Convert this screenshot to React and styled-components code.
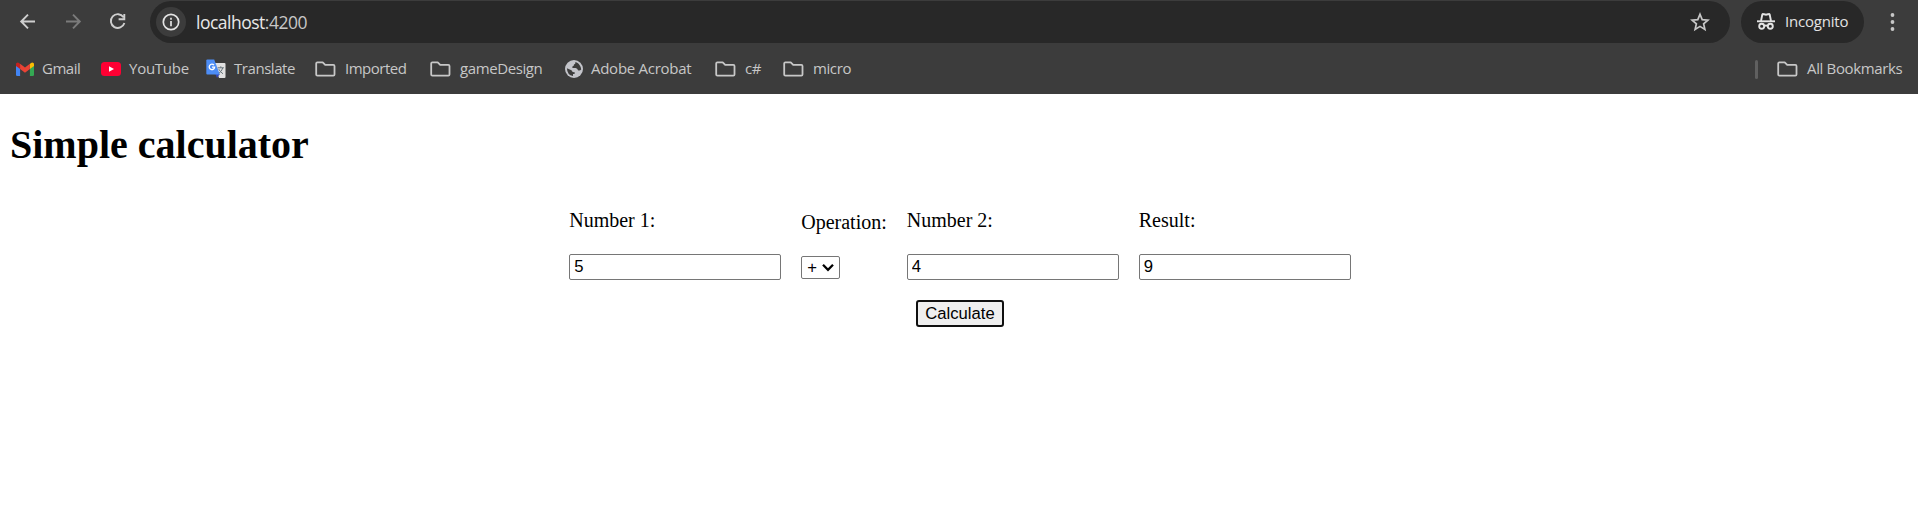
import React, { useState } from "react";
import styled, { createGlobalStyle } from "styled-components";

const GlobalStyle = createGlobalStyle`
  body { margin: 0; background: #fff; color: #000; font-family: "Liberation Serif", serif; }
  *, *::before, *::after { box-sizing: border-box; }
  svg { display: block; flex: none; }
`;

const Chrome = styled.header`
  height: 94px;
  background: #3c3c3c;
  font-family: "Open Sans", "Noto Sans", sans-serif;
  color: #c7c7c7;
`;
const Toolbar = styled.div`
  display: flex;
  align-items: center;
  height: 44px;
  padding: 1px 14px 1px 16px;
`;
const NavButtons = styled.div`
  display: flex;
  gap: 21px;
  width: 134px;
`;
const NavButton = styled.span`
  color: ${(p) => (p.$disabled ? "#7b7b7b" : "#cfcfcf")};
`;
const AddressBar = styled.div`
  display: flex;
  align-items: center;
  flex: none;
  width: 1580px;
  height: 42px;
  padding: 0 19px 0 6px;
  border-radius: 21px;
  background: #282828;
`;
const SiteInfo = styled.span`
  display: grid;
  place-items: center;
  width: 30px;
  height: 30px;
  border-radius: 50%;
  background: #3c3c3c;
  color: #e3e3e3;
`;
const Url = styled.span`
  flex: 1;
  margin-left: 10px;
  font-size: 17.5px;
  line-height: 24px;
  letter-spacing: -0.5px;
  color: #e8e8e8;
`;
const Port = styled.span`
  color: #c7c7c7;
`;
const Incognito = styled.div`
  display: flex;
  align-items: center;
  width: 123px;
  height: 42px;
  margin-left: 11px;
  padding-left: 15px;
  border-radius: 21px;
  background: #282828;
  color: #e3e3e3;
`;
const MenuButton = styled.span`
  margin-left: 18px;
  color: #c7c7c7;
`;
const Bookmarks = styled.nav`
  display: flex;
  align-items: center;
  height: 50px;
  padding: 0 16px;
`;
const Bookmark = styled.span`
  display: flex;
  align-items: center;
  flex: none;
  width: ${(p) => p.$width}px;
`;
const IconSlot = styled.span`
  flex: none;
  width: ${(p) => p.$width}px;
`;
const Label = styled.span`
  padding-bottom: 2px;
  font-size: 15px;
  line-height: 20px;
  white-space: nowrap;
  letter-spacing: ${(p) => p.$spacing || 0}px;
`;
const Spacer = styled.span`
  flex: 1;
`;
const Divider = styled.span`
  width: 3px;
  height: 19px;
  margin-right: 19px;
  border-radius: 1.5px;
  background: #606060;
`;

const Page = styled.main`
  padding: 28px 10px 0;
`;
const Title = styled.h1`
  margin: 0;
  font-size: 40px;
  line-height: 46px;
`;
const Form = styled.form`
  display: flex;
  flex-direction: column;
  align-items: center;
  gap: 20px;
  padding: 40px 0 0 2px;
`;
const Fields = styled.div`
  display: flex;
  align-items: flex-end;
  gap: 20px;
  height: 72px;
`;
const Field = styled.label`
  display: flex;
  flex-direction: column;
  align-items: flex-start;
  gap: 22px;
  padding-bottom: ${(p) => p.$bottom || 0}px;
  font-size: 20px;
  line-height: 23px;
`;
const Input = styled.input`
  width: 212px;
  height: 26px;
  margin: 0;
  padding: 0 4px;
  border: 1px solid #767676;
  border-radius: 2px;
  background: #fff;
  color: #000;
  font: 16.667px "Liberation Sans", sans-serif;
  outline: none;
`;
const SelectBox = styled.span`
  display: grid;
  grid-template-columns: 1fr;
  align-items: center;
  width: 39px;
  height: 23px;
  & > * { grid-area: 1 / 1; }
  svg { justify-self: end; margin-right: 6px; pointer-events: none; }
`;
const Select = styled.select`
  appearance: none;
  width: 39px;
  height: 23px;
  margin: 0;
  padding: 0 0 0 5px;
  border: 1px solid #767676;
  border-radius: 2px;
  background: #fff;
  color: #000;
  font: 16.667px "Liberation Sans", sans-serif;
  outline: none;
`;
const Button = styled.button`
  width: 88px;
  height: 27px;
  padding: 0;
  border: 2px solid #101010;
  border-radius: 3px;
  background: #efefef;
  color: #000;
  font: 16.667px "Liberation Sans", sans-serif;
`;

const stroke = { fill: "none", stroke: "currentColor", strokeWidth: 1.9 };

const ArrowIcon = ({ flip }) => (
  <svg width="24" height="24" viewBox="0 0 24 24" {...stroke}>
    <path d={flip ? "M5 11.5H18.4M12 4.6L18.8 11.5L12 18.4" : "M19 11.5H5.6M12 4.6L5.2 11.5L12 18.4"} />
  </svg>
);
const ReloadIcon = () => (
  <svg width="24" height="24" viewBox="0 0 24 24" {...stroke}>
    <path d="M17.5 7.2A6.9 6.9 0 1 0 18.4 13M18.3 3.9V9.2H12.6" />
  </svg>
);
const InfoIcon = () => (
  <svg width="18" height="18" viewBox="0 0 18 18" {...stroke} strokeWidth="1.7">
    <circle cx="9" cy="9" r="7.7" />
    <path d="M9 8v5.2M9 4.8v1.9" />
  </svg>
);
const StarIcon = () => (
  <svg width="22" height="22" viewBox="0 0 22 22" fill="none" stroke="#c7c7c7" strokeWidth="1.7">
    <path d="M11 3.2L13.2 8.6L18.9 9.1L14.6 12.8L15.9 18.4L11 15.4L6.1 18.4L7.4 12.8L3.1 9.1L8.8 8.6Z" />
  </svg>
);
const IncognitoIcon = () => (
  <svg width="20" height="20" viewBox="0 0 20 20" {...stroke}>
    <path d="M1 9.3H19" />
    <path d="M5 9L6.3 2.5Q6.5 1.8 7.2 2L10 2.7L12.8 2Q13.5 1.8 13.7 2.5L15 9" />
    <circle cx="5.7" cy="14.3" r="2.5" />
    <circle cx="14.3" cy="14.3" r="2.5" />
    <path d="M8.1 14Q10 12.9 11.9 14" />
  </svg>
);
const DotsIcon = () => (
  <svg width="20" height="24" viewBox="0 0 20 24" fill="currentColor">
    <circle cx="10.5" cy="5" r="1.9" />
    <circle cx="10.5" cy="12" r="1.9" />
    <circle cx="10.5" cy="19" r="1.9" />
  </svg>
);
const GmailIcon = () => (
  <svg width="18" height="14" viewBox="0 0 18 14">
    <path fill="#4285f4" d="M0 3L4.1 6V14H1.3Q0 14 0 12.7Z" />
    <path fill="#34a853" d="M13.9 6L18 3V12.7Q18 14 16.7 14H13.9Z" />
    <path fill="#fbbc04" d="M13.9 2L15 .9Q16.3 -.1 17.5 .9Q18 1.4 18 2.3V4L13.9 7Z" />
    <path fill="#c5221f" d="M0 4V2.3Q0 1.4.5.9Q1.7-.1 3 .9L4.1 2V7Z" />
    <path fill="#ea4335" d="M4.1 1.8L9 5.5L13.9 1.8V7L9 10.7L4.1 7Z" />
  </svg>
);
const YouTubeIcon = () => (
  <svg width="20" height="14" viewBox="0 0 20 14">
    <rect width="20" height="14" rx="3.5" fill="#ff0033" />
    <path d="M8 4.2L13 7L8 9.8Z" fill="#fff" />
  </svg>
);
const TranslateIcon = () => (
  <svg width="20" height="20" viewBox="0 0 20 20">
    <path fill="#e1e1e1" d="M8 4H18.5Q19.5 4 19.5 5V18Q19.5 19 18.5 19H13Z" />
    <path fill="#3348b8" d="M9.3 15H13.8L11 19Z" />
    <path fill="#4d8df5" d="M1.3 .5H8.2L13.8 15.5H1.3Q.3 15.5 .3 14.5V1.5Q.3 .5 1.3 .5Z" />
    <path fill="none" stroke="#fff" strokeWidth="1.3" d="M8 6.2A2.7 2.7 0 1 0 8.6 8.1H6" />
    <path fill="none" stroke="#68757c" strokeWidth="1" d="M11.7 8.8H17.9M14.8 7.3V8.8M16.8 8.8Q15.8 12.5 12.8 14.4M12.8 10.2Q14.3 13 17 14.8" />
  </svg>
);
const FolderIcon = () => (
  <svg width="21" height="17" viewBox="0 0 21 17" fill="none" stroke="#c7c7c7" strokeWidth="1.8" strokeLinejoin="round">
    <path d="M1.2 13.5V2.5Q1.2 1.3 2.4 1.3H7.7L10.2 3.9H18.3Q19.5 3.9 19.5 5.1V13.5Q19.5 14.7 18.3 14.7H2.4Q1.2 14.7 1.2 13.5Z" />
  </svg>
);
const GlobeIcon = () => (
  <svg width="18" height="18" viewBox="0 0 18 18">
    <circle cx="9" cy="9" r="9" fill="#c3c4ca" />
    <path fill="#3c3c3c" d="M10.4 2C11.5 2.1 15.9 4.3 16.2 9.6Q14.8 11 13 10.3Q12.5 8.3 10.6 8.1H7.4V6.4Q9.2 6.2 9 4.6Q10.8 4.4 10.4 2ZM1.9 8.3L6.5 10.3Q7.2 12.5 9.6 12.1V14H8V16.1Q2.2 15.2 1.9 8.3Z" />
  </svg>
);
const ChevronIcon = () => (
  <svg width="12" height="9" viewBox="0 0 12 9" fill="none" stroke="#000" strokeWidth="2.3">
    <path d="M1 1.8L6 6.8L11 1.8" />
  </svg>
);

const bookmarks = [
  { label: "Gmail", icon: GmailIcon, width: 85, slot: 26, spacing: -0.5 },
  { label: "YouTube", icon: YouTubeIcon, width: 105, slot: 28, spacing: -0.25 },
  { label: "Translate", icon: TranslateIcon, width: 109, slot: 28, spacing: -0.45 },
  { label: "Imported", icon: FolderIcon, width: 115, slot: 30, spacing: -0.5 },
  { label: "gameDesign", icon: FolderIcon, width: 135, slot: 30, spacing: -0.4 },
  { label: "Adobe Acrobat", icon: GlobeIcon, width: 150, slot: 26, spacing: -0.27 },
  { label: "c#", icon: FolderIcon, width: 68, slot: 30, spacing: -0.4 },
  { label: "micro", icon: FolderIcon, width: 70, slot: 30, spacing: -0.4 },
];

const operations = {
  "+": (a, b) => a + b,
  "-": (a, b) => a - b,
  "*": (a, b) => a * b,
  "/": (a, b) => a / b,
};

function BrowserChrome() {
  return (
    <Chrome>
      <Toolbar>
        <NavButtons>
          <NavButton><ArrowIcon /></NavButton>
          <NavButton $disabled><ArrowIcon flip /></NavButton>
          <NavButton><ReloadIcon /></NavButton>
        </NavButtons>
        <AddressBar>
          <SiteInfo><InfoIcon /></SiteInfo>
          <Url>localhost<Port>:4200</Port></Url>
          <StarIcon />
        </AddressBar>
        <Incognito>
          <IconSlot $width={29}><IncognitoIcon /></IconSlot>
          <Label $spacing={-0.2}>Incognito</Label>
        </Incognito>
        <MenuButton><DotsIcon /></MenuButton>
      </Toolbar>
      <Bookmarks>
        {bookmarks.map(({ label, icon: Icon, width, slot, spacing }) => (
          <Bookmark key={label} $width={width}>
            <IconSlot $width={slot}><Icon /></IconSlot>
            <Label $spacing={spacing}>{label}</Label>
          </Bookmark>
        ))}
        <Spacer />
        <Divider />
        <Bookmark $width={125}>
          <IconSlot $width={30}><FolderIcon /></IconSlot>
          <Label $spacing={-0.35}>All Bookmarks</Label>
        </Bookmark>
      </Bookmarks>
    </Chrome>
  );
}

export default function App() {
  const [first, setFirst] = useState("5");
  const [second, setSecond] = useState("4");
  const [operation, setOperation] = useState("+");
  const [result, setResult] = useState("9");

  const calculate = (event) => {
    event.preventDefault();
    setResult(String(operations[operation](Number(first), Number(second))));
  };

  return (
    <>
      <GlobalStyle />
      <BrowserChrome />
      <Page>
        <Title>Simple calculator</Title>
        <Form onSubmit={calculate}>
          <Fields>
            <Field>
              Number 1:
              <Input value={first} onChange={(e) => setFirst(e.target.value)} />
            </Field>
            <Field $bottom={1}>
              Operation:
              <SelectBox>
                <Select value={operation} onChange={(e) => setOperation(e.target.value)}>
                  {Object.keys(operations).map((sign) => (
                    <option key={sign}>{sign}</option>
                  ))}
                </Select>
                <ChevronIcon />
              </SelectBox>
            </Field>
            <Field>
              Number 2:
              <Input value={second} onChange={(e) => setSecond(e.target.value)} />
            </Field>
            <Field>
              Result:
              <Input value={result} readOnly />
            </Field>
          </Fields>
          <Button type="submit">Calculate</Button>
        </Form>
      </Page>
    </>
  );
}
